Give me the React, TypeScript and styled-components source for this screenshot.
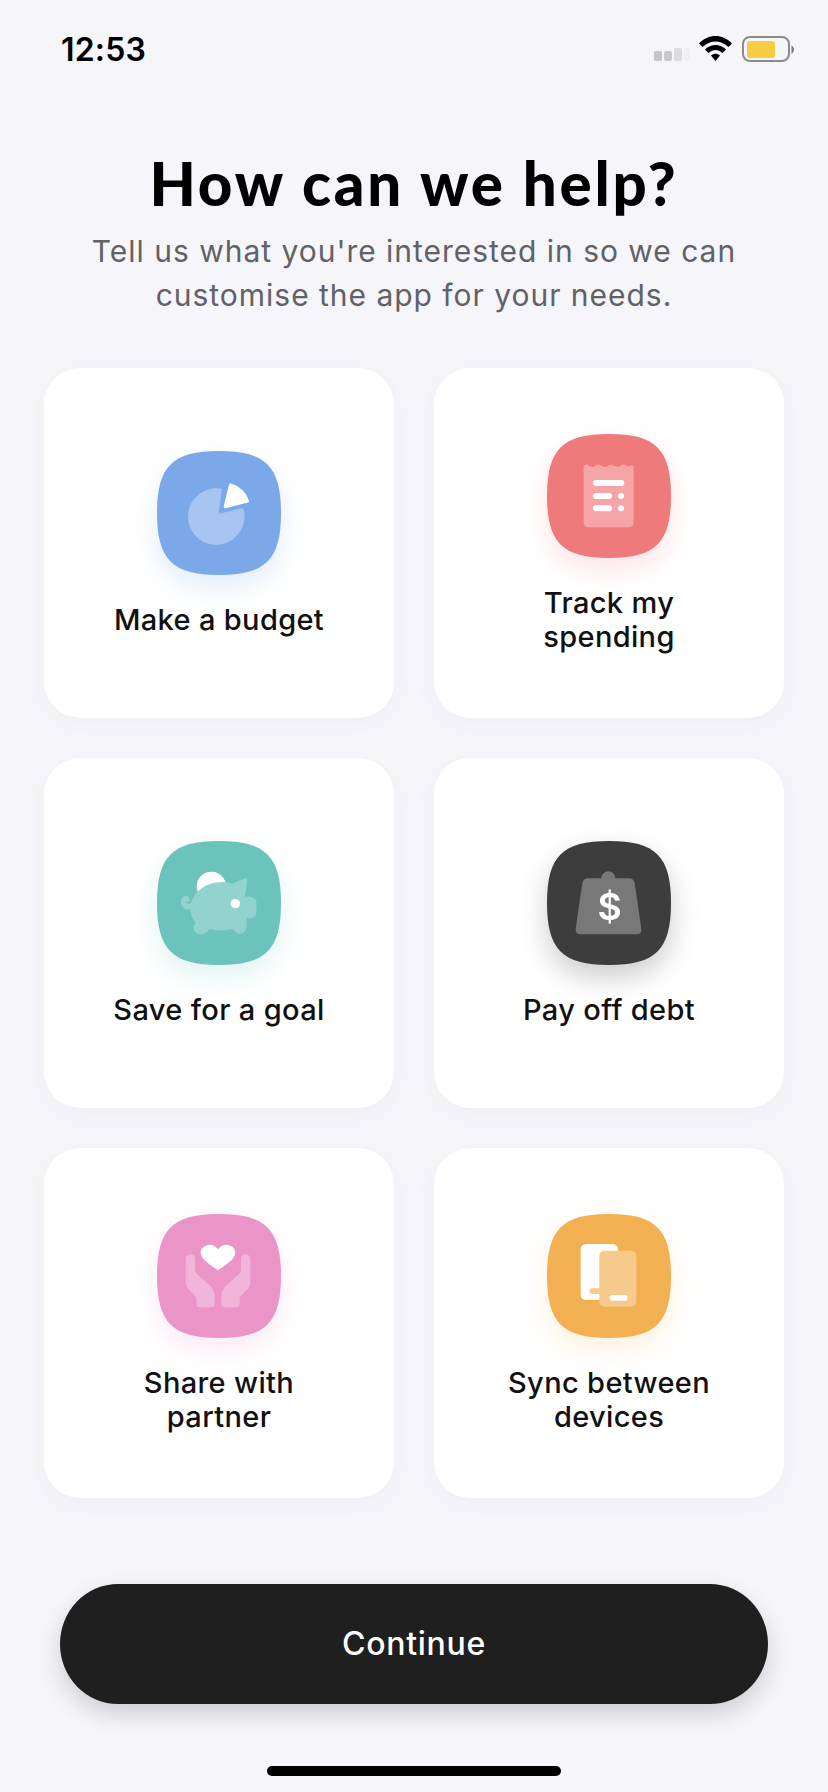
import React, { FC, ReactNode } from "react";
import styled, { createGlobalStyle } from "styled-components";

const GlobalStyle = createGlobalStyle`
  html, body {
    margin: 0;
    padding: 0;
    background: #f5f5fa;
  }
`;

const Page = styled.div`
  width: 828px;
  height: 1792px;
  overflow: hidden;
  background: #f5f5fa;
  font-family: "Inter", "Liberation Sans", sans-serif;
  display: flex;
  flex-direction: column;
`;

const StatusBar = styled.div`
  height: 75px;
  padding: 31px 34px 0 61px;
  box-sizing: border-box;
  display: flex;
  justify-content: space-between;
  align-items: flex-start;
`;

const Time = styled.span`
  font-size: 32px;
  line-height: 38px;
  font-weight: 600;
  letter-spacing: 0.2px;
  color: #000;
`;

const StatusIcons = styled.svg`
  width: 141px;
  height: 40px;
  margin-top: 1px;
`;

const Header = styled.header`
  text-align: center;
  height: 293px;
  box-sizing: border-box;
  padding-top: 72px;
`;

const Title = styled.h1`
  margin: 0 0 10px;
  font-family: "Lato", "Liberation Sans", sans-serif;
  font-size: 60px;
  line-height: 72px;
  font-weight: 900;
  letter-spacing: 2.8px;
  color: #000;
`;

const Subtitle = styled.p`
  margin: 0;
  font-size: 30px;
  line-height: 44px;
  font-weight: 400;
  letter-spacing: 0.98px;
  color: #616166;
`;

const Grid = styled.div`
  display: grid;
  grid-template-columns: 350px 350px;
  grid-auto-rows: 350px;
  gap: 40px;
  padding: 0 44px;
`;

const Card = styled.button`
  border: none;
  padding: 2px 0 0;
  border-radius: 36px;
  background: #fff;
  box-shadow: 0 6px 24px rgba(70, 70, 110, 0.04);
  display: flex;
  flex-direction: column;
  align-items: center;
  justify-content: center;
  gap: 28px;
  font-family: inherit;
`;

const Label = styled.span`
  width: 240px;
  font-size: 29px;
  line-height: 34px;
  font-weight: 500;
  letter-spacing: 0.35px;
  color: #111;
  text-align: center;
`;

const IconSvg = styled.svg<{ $shadow: string }>`
  width: 124px;
  height: 124px;
  overflow: visible;
  filter: drop-shadow(0 12px 14px ${(p) => p.$shadow});
`;

const ContinueButton = styled.button`
  margin: 86px 60px 0;
  padding: 0 0 2px;
  height: 120px;
  border: none;
  border-radius: 58px / 60px;
  background: #1f1f20;
  box-shadow: 0 10px 24px rgba(0, 0, 0, 0.16);
  color: #fff;
  font-family: inherit;
  font-size: 32px;
  font-weight: 500;
  letter-spacing: 0.7px;
`;

const HomeBar = styled.div`
  align-self: center;
  margin-top: 62px;
  width: 294px;
  height: 10px;
  border-radius: 5px;
  background: #000;
`;

const SQUIRCLE =
  "M186 0C326 0 372 46 372 186C372 326 326 372 186 372C46 372 0 326 0 186C0 46 46 0 186 0Z";

type IconProps = {
  color: string;
  shadow: string;
  originX?: number;
  originY: number;
  children: ReactNode;
};

// glyph coordinates are in 1/3 px, measured from the 3x crops
const AppIcon: FC<IconProps> = ({ color, shadow, originX = 82, originY, children }) => (
  <IconSvg $shadow={shadow} viewBox="0 0 372 372">
    <path d={SQUIRCLE} fill={color} />
    <g transform={`translate(${-originX} ${-originY})`}>{children}</g>
  </IconSvg>
);

const BudgetIcon = () => (
  <AppIcon color="#7ba8e8" shadow="rgba(123,168,232,.22)" originY={93}>
    <path
      d="M266 283L275 207A84 84 0 1 0 340 265Z"
      fill="#a7c5f0"
      stroke="#a7c5f0"
      strokeWidth={2}
      strokeLinejoin="round"
    />
    <path
      d="M287 260L303 195A78 78 0 0 1 353 243Z"
      fill="#fff"
      stroke="#fff"
      strokeWidth={10}
      strokeLinejoin="round"
    />
  </AppIcon>
);

const SpendingIcon = () => (
  <AppIcon color="#ef7a7b" shadow="rgba(239,122,123,.2)" originY={42}>
    <path
      d="M192 142Q192 132 204 134Q212 142 222 141Q232 132 240 134Q250 142 260 141Q270 132 278 134Q288 142 298 141Q308 132 316 134Q324 142 330 138Q342 132 342 142V306Q342 322 326 322H208Q192 322 192 306Z"
      fill="#f5a5a6"
    />
    <rect x={220} y={180} width={94} height={18} rx={9} fill="#fff" />
    <rect x={220} y={219} width={57} height={18} rx={9} fill="#fff" />
    <rect x={220} y={256} width={57} height={18} rx={9} fill="#fff" />
    <circle cx={304} cy={228} r={9} fill="#fff" />
    <circle cx={304} cy={265} r={9} fill="#fff" />
  </AppIcon>
);

const GoalIcon = () => (
  <AppIcon color="#6cc3bc" shadow="rgba(108,195,188,.2)" originY={65}>
    <circle cx={245} cy={201} r={44} fill="#fff" />
    <path
      d="M200 222C225 190 275 182 310 193C325 185 338 178 352 176C353 195 349 212 345 232C358 230 380 232 380 248V282C380 293 368 297 350 297C353 312 352 343 332 343C320 343 316 335 308 328C285 335 262 335 240 328C232 338 225 345 211 345C194 345 186 325 198 310C188 298 182 285 182 268C172 276 154 268 154 248C154 228 178 222 180 240C181 250 172 246 169 248C171 256 180 254 184 250C188 240 193 230 200 222Z"
      fill="#93d3ce"
    />
    <circle cx={317} cy={253} r={14} fill="#fff" />
  </AppIcon>
);

const DollarSign = styled.text`
  font-family: "Inter", "Liberation Sans", sans-serif;
  font-size: 112px;
  font-weight: 600;
  fill: #fff;
  text-anchor: middle;
`;

const DebtIcon = () => (
  <AppIcon color="#3d3d3d" shadow="rgba(0,0,0,.2)" originY={65}>
    <circle cx={266} cy={177} r={21} fill="#787878" />
    <path
      d="M205 177H328Q342 177 345 191L365 328Q367 345 350 345H184Q166 345 168 328L188 191Q191 177 205 177Z"
      fill="#787878"
    />
    <DollarSign x={270} y={303}>
      $
    </DollarSign>
  </AppIcon>
);

const Hand = () => (
  <path d="M168 178C168 158 196 158 196 178V210C196 216 200 220 204 224L240 256C250 266 255 276 255 290V312Q255 322 245 322H210Q200 322 200 312V296C200 292 198 290 194 286L176 266C170 260 168 254 168 246Z" fill="#f2b5da" />
);

const ShareIcon = () => (
  <AppIcon color="#ea94c8" shadow="rgba(234,148,200,.2)" originY={42}>
    <Hand />
    <g transform="translate(530 0) scale(-1 1)">
      <Hand />
    </g>
    <path
      d="M265 211C245 196 213 178 213 158C213 138 245 122 265 148C285 122 317 138 317 158C317 178 285 196 265 211Z"
      fill="#fff"
    />
  </AppIcon>
);

const SyncIcon = () => (
  <AppIcon color="#f3b052" shadow="rgba(243,176,82,.18)" originY={42}>
    <rect x={183} y={132} width={112} height={168} rx={16} fill="#fff" />
    <rect x={210} y={265} width={40} height={17} rx={8} fill="#f6ca8b" />
    <rect x={239} y={152} width={111} height={168} rx={15} fill="#f6ca8b" />
    <rect x={270} y={285} width={54} height={17} rx={8} fill="#fff" />
  </AppIcon>
);

const OPTIONS: { label: ReactNode; icon: ReactNode }[] = [
  { label: "Make a budget", icon: <BudgetIcon /> },
  { label: "Track my spending", icon: <SpendingIcon /> },
  { label: "Save for a goal", icon: <GoalIcon /> },
  { label: "Pay off debt", icon: <DebtIcon /> },
  { label: <>Share with<br />partner</>, icon: <ShareIcon /> },
  { label: <>Sync between<br />devices</>, icon: <SyncIcon /> },
];

const App: FC = () => (
  <Page>
    <GlobalStyle />
    <StatusBar>
      <Time>12:53</Time>
      <StatusIcons viewBox="0 0 141 40">
        <rect x={1} y={19} width={8} height={10} rx={2} fill="#c6c6ca" />
        <rect x={11} y={19} width={8} height={10} rx={2} fill="#c9c9cd" />
        <rect x={21} y={16} width={8} height={13} rx={2} fill="#dcdce0" />
        <rect x={31} y={15} width={6} height={14} rx={2} fill="#f0f0f4" />
        <path d="M46 11.5C55 1.5 70 1.5 79 11.5L75.5 15C68 7.5 57 7.5 49.5 15Z" fill="#000" />
        <path d="M52 17.5C58 11.5 67 11.5 73 17.5L69.5 21C65 17 60 17 55.5 21Z" fill="#000" />
        <path d="M58 23.5C61 21 64 21 67 23.5L62.5 29Z" fill="#000" />
        <rect x={90} y={5} width={46} height={24} rx={7} fill="none" stroke="#8b8b8f" strokeWidth={2} />
        <rect x={94} y={9} width={28} height={17} rx={3} fill="#f7cc45" />
        <path d="M138.500 13Q141 15 141 17.500Q141 20 138.500 22Z" fill="#77777b" />
      </StatusIcons>
    </StatusBar>
    <Header>
      <Title>How can we help?</Title>
      <Subtitle>
        Tell us what you're interested in so we can
        <br />
        customise the app for your needs.
      </Subtitle>
    </Header>
    <Grid>
      {OPTIONS.map((option, i) => (
        <Card key={i} type="button">
          {option.icon}
          <Label>{option.label}</Label>
        </Card>
      ))}
    </Grid>
    <ContinueButton type="button">Continue</ContinueButton>
    <HomeBar />
  </Page>
);

export default App;
